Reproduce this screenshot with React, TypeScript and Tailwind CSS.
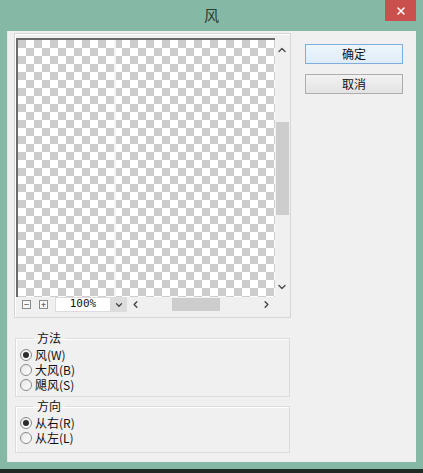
import { ChevronUp, ChevronDown, ChevronLeft, ChevronRight, X } from "lucide-react"

const font = "font-['Noto_Sans_CJK_SC','Noto_Sans',sans-serif]"

function Radio({ checked, label }: { checked?: boolean; label: string }) {
  return (
    <div className="flex items-center h-[15px] gap-[3px] overflow-hidden">
      <span className="w-[12px] h-[12px] shrink-0 rounded-full border border-[#8a8a8a] bg-gradient-to-br from-[#e6e6e6] to-white flex items-center justify-center">
        {checked && <span className="w-[6px] h-[6px] rounded-full bg-[#2b2b2b]" />}
      </span>
      <span className="block h-[15px] text-[12px] leading-[15px] text-[#111]">{label}</span>
    </div>
  )
}

function Group({ title, children, className }: { title: string; children: React.ReactNode; className?: string }) {
  return (
    <fieldset className={`border border-[#dcdcdc] shadow-[inset_1px_1px_0_#fff] ml-[1px] w-[275px] pl-[4px] ${className ?? ""}`}>
      <legend className="ml-[13px] px-[4px] text-[12px] leading-[14px] text-[#111]">{title}</legend>
      {children}
    </fieldset>
  )
}

export default function App() {
  return (
    <div className={`w-[423px] h-[473px] bg-[#85b9a5] flex flex-col ${font}`}>
      {/* title bar */}
      <div className="h-[31px] relative flex items-center justify-center">
        <span className="text-[15px] text-[#2c3a35]">风</span>
        <div className="absolute right-[7px] top-0 w-[31px] h-[21px] bg-[#c9504c] flex items-center justify-center">
          <X className="w-[12px] h-[12px] text-white" strokeWidth={3} />
        </div>
      </div>

      {/* client area */}
      <div className="mx-[7px] h-[431px] bg-[#f0f0f0] border-l border-[#dfe9e5] flex">
        <div className="w-[290px] pl-[6px] pt-[2px] flex flex-col">
          {/* preview */}
          <div className="w-[277px] h-[285px] border border-[#d6d6d6] shadow-[inset_1px_1px_0_#fff] pt-[4px] pl-[1px] flex flex-col">
            <div className="flex">
              <div className="relative w-[259px] h-[259px] border-t-2 border-l-2 border-[#6a6a6a] bg-[conic-gradient(#fff_25%,#cdcdcd_0_50%,#fff_0_75%,#cdcdcd_0)] bg-[length:16px_16px]">
                <div className="absolute left-[96px] top-0 bottom-0 w-[2px] bg-[#f4f4f4]" />
              </div>
              <div className="w-[14px] h-[259px] bg-[#f0f0f0] flex flex-col items-center">
                <ChevronUp className="w-[12px] h-[12px] mt-[6px] text-[#555]" strokeWidth={3} />
                <div className="w-[13px] h-[93px] bg-[#cdcdcd] mt-[66px]" />
                <div className="flex-1" />
                <ChevronDown className="w-[12px] h-[12px] mb-[4px] text-[#555]" strokeWidth={3} />
              </div>
            </div>
            <div className="h-[15px] flex items-center">
              <div className="w-[9px] h-[9px] ml-[6px] border border-[#8a8a8a] bg-[#f8f8f8] flex items-center justify-center text-[9px] leading-none text-[#333]">−</div>
              <div className="w-[9px] h-[9px] ml-[8px] border border-[#8a8a8a] bg-[#f8f8f8] flex items-center justify-center text-[9px] leading-none text-[#333]">+</div>
              <div className="ml-[7px] w-[56px] h-[15px] bg-white border border-[#dcdcdc] flex items-center justify-center text-[11px] text-[#111] font-['DejaVu_Sans_Mono',monospace]">100%</div>
              <div className="w-[16px] h-[15px] bg-[#dcdcdc] flex items-center justify-center">
                <ChevronDown className="w-[10px] h-[10px] text-[#444]" strokeWidth={3} />
              </div>
              <ChevronLeft className="w-[11px] h-[11px] ml-[3px] text-[#444]" strokeWidth={3} />
              <div className="ml-[31px] w-[48px] h-[13px] bg-[#cdcdcd]" />
              <div className="flex-1" />
              <ChevronRight className="w-[11px] h-[11px] mr-[18px] text-[#444]" strokeWidth={3} />
            </div>
          </div>

          <Group title="方法" className="mt-[13px] h-[66px] pt-[2px]">
            <Radio checked label="风(W)" />
            <Radio label="大风(B)" />
            <Radio label="飓风(S)" />
          </Group>

          <Group title="方向" className="mt-[2px] h-[54px] pt-[2px]">
            <Radio checked label="从右(R)" />
            <Radio label="从左(L)" />
          </Group>
        </div>

        {/* buttons */}
        <div className="pl-[7px] pt-[13px] flex flex-col gap-[10px]">
          <button className="w-[98px] h-[20px] border border-[#7eaee0] bg-gradient-to-b from-[#eef5fc] to-[#dfecf9] text-[12px] text-[#111] flex items-center justify-center">
            确定
          </button>
          <button className="w-[98px] h-[20px] border border-[#adadad] bg-gradient-to-b from-[#f2f2f2] to-[#e3e3e3] text-[12px] text-[#111] flex items-center justify-center">
            取消
          </button>
        </div>
      </div>

      <div className="flex-1" />
      <div className="h-[4px] bg-[#1e2a26]" />
    </div>
  )
}
